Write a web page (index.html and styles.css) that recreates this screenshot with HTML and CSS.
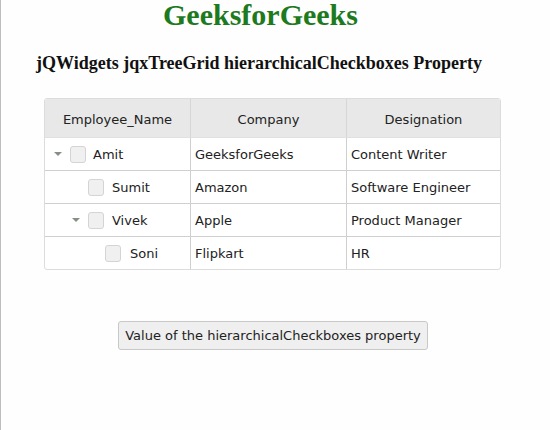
FILE: index.html
```html
<!DOCTYPE html>
<html>
<head>
<meta charset="utf-8">
<link rel="stylesheet" href="styles.css">
</head>
<body>
<div class="page">
  <h1 class="title">GeeksforGeeks</h1>
  <h3 class="subtitle">jQWidgets jqxTreeGrid hierarchicalCheckboxes Property</h3>
  <div class="tree-grid">
    <div class="row header">
      <div class="cell">Employee_Name</div>
      <div class="cell">Company</div>
      <div class="cell">Designation</div>
    </div>
    <div class="row">
      <div class="cell name level0"><span class="toggle"></span><span class="check"></span><span class="label">Amit</span></div>
      <div class="cell">GeeksforGeeks</div>
      <div class="cell">Content Writer</div>
    </div>
    <div class="row">
      <div class="cell name level1"><span class="toggle empty"></span><span class="check"></span><span class="label">Sumit</span></div>
      <div class="cell">Amazon</div>
      <div class="cell">Software Engineer</div>
    </div>
    <div class="row">
      <div class="cell name level1"><span class="toggle"></span><span class="check"></span><span class="label">Vivek</span></div>
      <div class="cell">Apple</div>
      <div class="cell">Product Manager</div>
    </div>
    <div class="row last">
      <div class="cell name level2"><span class="toggle empty"></span><span class="check"></span><span class="label">Soni</span></div>
      <div class="cell">Flipkart</div>
      <div class="cell">HR</div>
    </div>
  </div>
  <div class="actions">
    <button class="btn">Value of the hierarchicalCheckboxes property</button>
  </div>
</div>
</body>
</html>
```
FILE: styles.css
```css
html {
  background: #fefefe;
}
body {
  margin: 0;
  min-height: 430px;
  border-left: 1px solid #bdbdbd;
  box-sizing: border-box;
  background: #fefefe;
}
.page {
  display: flex;
  flex-direction: column;
}
.title {
  width: 519px;
  margin: 0;
  padding-top: 0;
  text-align: center;
  font-family: "Liberation Serif", serif;
  font-weight: bold;
  font-size: 30px;
  line-height: 29px;
  color: #1d7a1d;
}
.subtitle {
  width: 516px;
  margin: 23px 0 0 0;
  text-align: center;
  font-family: "Liberation Serif", serif;
  font-weight: bold;
  font-size: 18px;
  line-height: 22px;
  color: #111;
}
.tree-grid {
  margin: 24px 0 0 43px;
  width: 457px;
  box-sizing: border-box;
  border: 1px solid #dcdcdc;
  border-radius: 3px;
  overflow: hidden;
  font-family: "DejaVu Sans", Verdana, sans-serif;
  font-size: 13px;
  color: #222;
  background: #fff;
}
.row {
  display: grid;
  grid-template-columns: 146px 156px 153px;
  height: 33px;
  border-bottom: 1px solid #d0d0d0;
  box-sizing: border-box;
}
.row.last {
  height: 32px;
  border-bottom: none;
}
.row.header {
  height: 39px;
  background: #e8e8e8;
  border-bottom: 1px solid #e0e0e0;
}
.cell {
  display: flex;
  align-items: center;
  padding-left: 4px;
  border-right: 1px solid #cfcfcf;
  white-space: nowrap;
}
.cell:last-child {
  border-right: none;
}
.header .cell {
  justify-content: center;
  padding-left: 0;
  padding-top: 2px;
  border-right-color: #d6d6d6;
}
.level0 { padding-left: 2px; }
.level1 { padding-left: 20px; }
.level2 { padding-left: 37px; }
.toggle {
  width: 22px;
  height: 16px;
  display: inline-flex;
  align-items: center;
  justify-content: center;
  flex: none;
}
.toggle::before {
  content: "";
  width: 0;
  height: 0;
  border-left: 4px solid transparent;
  border-right: 4px solid transparent;
  border-top: 4px solid #858f85;
}
.toggle.empty::before {
  display: none;
}
.check {
  width: 16px;
  height: 17px;
  box-sizing: border-box;
  border: 1px solid #d4d4d4;
  border-radius: 3px;
  background: #f0f0f0;
  flex: none;
  margin-left: 1px;
}
.label {
  margin-left: 7px;
}
.level1 .label { margin-left: 8px; }
.level2 .label { margin-left: 9px; }
.actions {
  display: flex;
  padding-left: 117px;
  margin-top: 51px;
}
.btn {
  width: 310px;
  height: 29px;
  box-sizing: border-box;
  border: 1px solid #c8c8c8;
  border-radius: 3px;
  background: #efefef;
  font-family: "DejaVu Sans", Verdana, sans-serif;
  font-size: 13px;
  color: #222;
  padding: 0;
}
```
